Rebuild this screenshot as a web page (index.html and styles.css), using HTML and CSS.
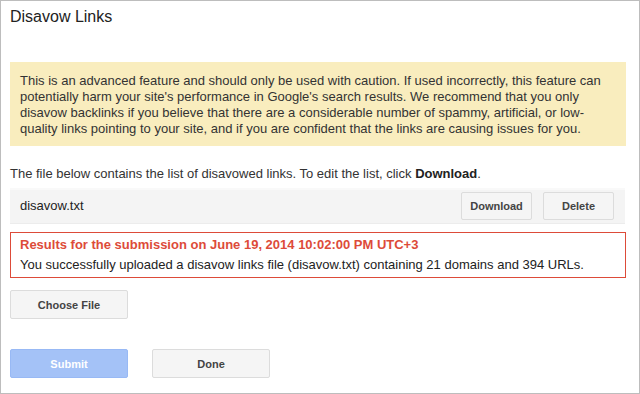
FILE: index.html
```html
<!DOCTYPE html>
<html lang="en">

<head>
  <meta charset="UTF-8" />
  <title>Disavow Links</title>
  <link rel="stylesheet" href="styles.css">
</head>

<body>
  <div class="dialog">
    <h1 class="dialog_title">Disavow Links</h1>

    <div class="warning_box">
      This is an advanced feature and should only be used with caution. If used incorrectly, this feature can
      potentially harm your site's performance in Google's search results. We recommend that you only
      disavow backlinks if you believe that there are a considerable number of spammy, artificial, or low-
      quality links pointing to your site, and if you are confident that the links are causing issues for you.
    </div>

    <p class="file_info">The file below contains the list of disavowed links. To edit the list, click <strong>Download</strong>.</p>

    <div class="file_row">
      <span class="file_name">disavow.txt</span>
      <div class="btn_grp">
        <button class="btn">Download</button>
        <button class="btn">Delete</button>
      </div>
    </div>

    <div class="result_box">
      <div class="result_title">Results for the submission on June 19, 2014 10:02:00 PM UTC+3</div>
      <div class="result_text">You successfully uploaded a disavow links file (disavow.txt) containing 21 domains and 394 URLs.</div>
    </div>

    <button class="btn btn_large">Choose File</button>

    <div class="footer_btns">
      <button class="btn btn_large btn_submit">Submit</button>
      <button class="btn btn_large">Done</button>
    </div>
  </div>
</body>

</html>
```

FILE: styles.css
```css
body {
  margin: 0;
  font-family: "Liberation Sans", Arial, sans-serif;
  color: #222;
  background: #fff;
}

.dialog {
  box-sizing: border-box;
  width: 640px;
  height: 394px;
  border: 1px solid #bdbdbd;
  padding: 6px 13px 0 9px;
}

.dialog_title {
  margin: 0;
  font-size: 16px;
  font-weight: normal;
  line-height: 20px;
  color: #222;
}

.warning_box {
  margin-top: 35px;
  background-color: #f9edbe;
  padding: 11px 10px 9px 10px;
  font-size: 13px;
  line-height: 16px;
  color: #333;
}

.file_info {
  margin: 20px 0 0 0;
  font-size: 13px;
  line-height: 16px;
  color: #333;
}

.file_info strong {
  color: #222;
}

.file_row {
  display: flex;
  align-items: center;
  justify-content: space-between;
  margin-top: 6px;
  margin-right: 1px;
  height: 36px;
  box-sizing: border-box;
  background-color: #f4f4f4;
  border-top: 2px solid #f9f9f9;
  border-bottom: 1px solid #ececec;
  padding: 0 11px 2px 10px;
}

.file_name {
  font-size: 13px;
  color: #222;
}

.btn_grp {
  display: flex;
  gap: 11px;
}

.btn {
  box-sizing: border-box;
  height: 28px;
  width: 71px;
  padding: 0;
  background-color: #f5f5f5;
  border: 1px solid #dcdcdc;
  border-radius: 2px;
  font-family: "Liberation Sans", Arial, sans-serif;
  font-size: 11px;
  font-weight: bold;
  color: #444;
}

.result_box {
  margin-top: 8px;
  border: 1px solid #dd4b39;
  padding: 2px 9px 2px 9px;
  font-size: 13px;
  line-height: 20px;
}

.result_title {
  color: #dd4b39;
  font-weight: bold;
}

.result_text {
  color: #222;
}

.btn_large {
  display: block;
  margin-top: 12px;
  width: 118px;
  height: 29px;
}

.footer_btns {
  display: flex;
  gap: 24px;
  margin-top: 30px;
}

.footer_btns .btn_large {
  margin-top: 0;
}

.btn_submit {
  background-color: #a4c2f7;
  border-color: #98b9f5;
  color: #fff;
}
```
